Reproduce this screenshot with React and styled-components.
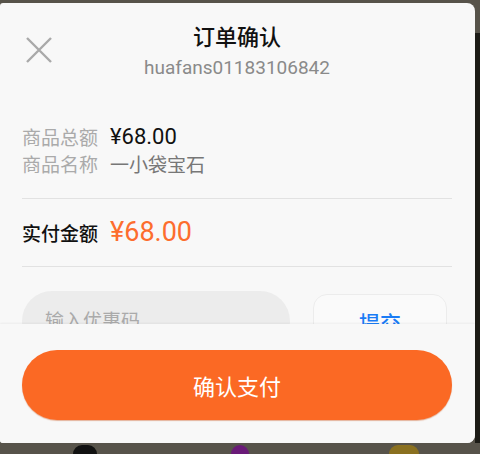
import React from 'react';
import styled, { createGlobalStyle } from 'styled-components';

const GlobalStyle = createGlobalStyle`
  html, body {
    margin: 0;
    padding: 0;
    width: 480px;
    height: 454px;
    overflow: hidden;
    background: #57534a;
    font-family: Roboto, "Noto Sans CJK SC", sans-serif;
  }
`;

// Backdrop behind the dialog
const Page = styled.div`
  width: 480px;
  height: 454px;
  display: flex;
  flex-direction: column;
  padding-top: 3px;
  box-sizing: border-box;
`;

const Stage = styled.div`
  display: flex;
  height: 440px;
`;

const Edge = styled.div`
  flex: 1;
  margin-top: 30px;
  background: #1c1b16;
`;

// Dialog panel
const Panel = styled.div`
  width: 475px;
  height: 440px;
  background: #f8f8f8;
  border-radius: 3px 8px 8px 3px;
  display: flex;
  flex-direction: column;
  overflow: hidden;
`;

const Scroll = styled.div`
  flex: 1;
  overflow: hidden;
  padding: 0 23px 0 22px;
`;

const Header = styled.div`
  position: relative;
  padding-top: 20px;
  text-align: center;
`;

const Close = styled.button`
  position: absolute;
  left: 3px;
  top: 33px;
  width: 28px;
  height: 28px;
  padding: 0;
  border: none;
  background: none;
`;

const Title = styled.div`
  font-size: 22px;
  line-height: 30px;
  font-weight: 500;
  color: #111;
`;

const Subtitle = styled.div`
  margin-top: 3px;
  font-size: 19px;
  line-height: 24px;
  color: #8a8a8a;
`;

const Info = styled.div`
  margin-top: 43px;
  padding-bottom: 21px;
  border-bottom: 1px solid #e2e2e2;
`;

const Row = styled.div`
  display: flex;
  align-items: center;
  gap: 12px;
  height: ${p => p.h || 27}px;
`;

const Label = styled.span`
  font-size: 19px;
  color: ${p => (p.dark ? '#111' : '#aaaaaa')};
  font-weight: ${p => (p.dark ? 500 : 400)};
`;

const Value = styled.span`
  font-size: ${p => p.size || 22}px;
  color: ${p => p.color || '#111'};
`;

const Total = styled.div`
  border-bottom: 1px solid #e2e2e2;
  padding: 0 0 1px;
`;

const Coupon = styled.div`
  display: flex;
  align-items: flex-start;
  gap: 23px;
  margin-top: 24px;
`;

const Input = styled.input`
  width: 268px;
  min-width: 0;
  height: 60px;
  box-sizing: border-box;
  border: none;
  border-radius: 30px;
  background: #ececec;
  padding: 0 23px;
  font-size: 19px;
  font-family: inherit;
  outline: none;
  &::placeholder {
    color: #aaaaaa;
  }
`;

const Submit = styled.button`
  width: 134px;
  height: 56px;
  margin-top: 3px;
  border: 1px solid #ececec;
  border-radius: 14px;
  background: #fafafa;
  color: #1a7cf5;
  font-size: 21px;
  font-weight: 500;
  font-family: inherit;
`;

const Footer = styled.div`
  height: 119px;
  flex-shrink: 0;
  background: #f8f8f8;
  box-shadow: 0 -1px 2px rgba(0, 0, 0, 0.05);
  padding: 26px 23px 0 22px;
  box-sizing: border-box;
`;

const PayButton = styled.button`
  width: 100%;
  height: 70px;
  border: none;
  border-radius: 35px;
  background: #fb6924;
  box-shadow: 0 1px 1px rgba(200, 80, 20, 0.4);
  color: #fff;
  font-size: 22px;
  font-family: inherit;
`;

const Strip = styled.div`
  flex: 1;
  display: flex;
  align-items: flex-end;
`;

const Token = styled.div`
  width: ${p => p.w}px;
  height: 9px;
  margin-left: ${p => p.x}px;
  border-radius: ${p => p.w / 2}px ${p => p.w / 2}px 0 0;
  background: ${p => p.color};
`;

const CloseIcon = () => (
  <svg width="28" height="28" viewBox="0 0 28 28">
    <path d="M2 2 L26 26 M26 2 L2 26" stroke="#a9a9a9" strokeWidth="2.4" fill="none" />
  </svg>
);

export default function App() {
  return (
    <>
      <GlobalStyle />
      <Page>
        <Stage>
          <Panel>
            <Scroll>
              <Header>
                <Close aria-label="close">
                  <CloseIcon />
                </Close>
                <Title>订单确认</Title>
                <Subtitle>huafans01183106842</Subtitle>
              </Header>
              <Info>
                <Row>
                  <Label>商品总额</Label>
                  <Value>¥68.00</Value>
                </Row>
                <Row>
                  <Label>商品名称</Label>
                  <Value size={19} color="#777">一小袋宝石</Value>
                </Row>
              </Info>
              <Total>
                <Row h={66}>
                  <Label dark>实付金额</Label>
                  <Value size={27} color="#fd6d2d">¥68.00</Value>
                </Row>
              </Total>
              <Coupon>
                <Input placeholder="输入优惠码" />
                <Submit>提交</Submit>
              </Coupon>
            </Scroll>
            <Footer>
              <PayButton>确认支付</PayButton>
            </Footer>
          </Panel>
          <Edge />
        </Stage>
        <Strip>
          <Token x={73} w={24} color="#111" />
          <Token x={134} w={18} color="#6a1a78" />
          <Token x={140} w={30} color="#8a7020" />
        </Strip>
      </Page>
    </>
  );
}
